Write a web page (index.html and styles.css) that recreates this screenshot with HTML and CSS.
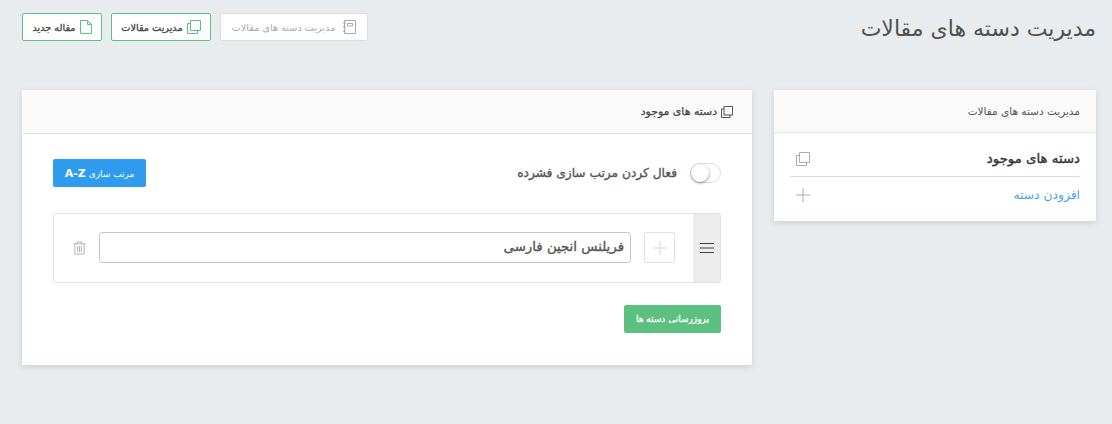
FILE: index.html
```html
<!DOCTYPE html>
<html lang="fa" dir="rtl">
<head>
<meta charset="utf-8">
<title>مدیریت دسته های مقالات</title>
<link rel="stylesheet" href="styles.css">
</head>
<body>
<header class="top">
  <h1 class="title">مدیریت دسته های مقالات</h1>
  <nav class="actions">
    <a class="btn btn-muted"><svg class="ico" viewBox="0 0 14 14"><path d="M2.500.5h11v13h-11zM.8 3h3M.8 7h3M.8 11h3M5.500 3.500h5v2.500h-5z"/></svg>مدیریت دسته های مقالات</a>
    <a class="btn btn-green btn-manage"><svg class="ico ico-green" viewBox="0 0 14 14"><path d="M3.500.5h10v10h-10zM3.500 3.500h-3v10h10v-3"/></svg>مدیریت مقالات</a>
    <a class="btn btn-green btn-new"><svg class="ico ico-green ico-doc" viewBox="0 0 12 14"><path d="M.5.5h7l4 4v9h-11zM7.500.5v4h4"/></svg>مقاله جدید</a>
  </nav>
</header>
<main class="columns">
  <aside class="card side">
    <div class="side-head">مدیریت دسته های مقالات</div>
    <ul class="menu">
      <li class="menu-item menu-active">
        <span>دسته های موجود</span>
        <svg class="menu-ico" viewBox="0 0 14 14"><path d="M3.500.5h10v10h-10zM3.500 3.500h-3v10h10v-3"/></svg>
      </li>
      <li class="menu-item menu-link">
        <span>افزودن دسته</span>
        <svg class="menu-ico" viewBox="0 0 14 14"><path d="M7 0v14M0 7h14"/></svg>
      </li>
    </ul>
  </aside>
  <section class="card content">
    <div class="content-head"><svg class="head-ico" viewBox="0 0 14 14"><path d="M3.500.5h10v10h-10zM3.500 3.500h-3v10h10v-3"/></svg>دسته های موجود</div>
    <div class="content-body">
      <div class="tools">
        <label class="toggle-wrap"><span class="toggle"><span class="knob"></span></span><span>فعال کردن مرتب سازی فشرده</span></label>
        <button class="btn-sort">مرتب سازی <b class="az" dir="ltr">A-Z</b></button>
      </div>
      <div class="row">
        <div class="handle"><svg class="handle-ico" viewBox="0 0 14 10"><path d="M0 .5h14M0 5h14M0 9.500h14"/></svg></div>
        <div class="row-main">
          <span class="add"><svg class="add-ico" viewBox="0 0 14 14"><path d="M7 0v14M0 7h14"/></svg></span>
          <input class="field" type="text" value="فریلنس انجین فارسی">
          <svg class="trash" viewBox="0 0 14 14"><path d="M.5 2.500h13M4.500 2.500v-2h5v2M2 2.500v11h10v-11M5 5v6.500M7 5v6.500M9 5v6.500"/></svg>
        </div>
      </div>
      <button class="btn-save">بروزرسانی دسته ها</button>
    </div>
  </section>
</main>
</body>
</html>
```
FILE: styles.css
```css
* { box-sizing: border-box; }
html, body { height: 100%; }
body {
  margin: 0;
  padding: 13px 16px 0 22px;
  background: #e9ecef;
  font-family: "DejaVu Sans", "Noto Sans", sans-serif;
  color: #4a4a4a;
  overflow: hidden;
}
svg { fill: none; stroke: currentColor; stroke-width: 1; flex: none; display: block; }
.top { display: flex; justify-content: space-between; align-items: center; height: 28px; }
.title { margin: 4px 0 0; font-size: 22px; font-weight: 400; color: #505050; line-height: 32px; }
.actions { display: flex; gap: 9px; }
.btn {
  display: flex; align-items: center; justify-content: center; gap: 4px;
  height: 28px; width: 100px;
  border: 1px solid #5cc080; border-radius: 2px;
  background: #fff; font-size: 9.700px; color: #444;
  -webkit-text-stroke: .3px #444;
}
.btn-muted { width: 148px; border-color: #dcdcdc; color: #aaa; font-size: 9.700px; gap: 7px; -webkit-text-stroke: 0; }
.btn-new { width: 80px; }
.ico { width: 14px; height: 14px; color: #aaa; }
.ico-green { color: #5cc080; }
.ico-doc { width: 12px; }
.columns { display: flex; gap: 22px; align-items: flex-start; margin-top: 49px; }
.card { background: #fff; border-radius: 2px; box-shadow: 0 2px 6px rgba(60, 70, 90, .18); }
.side { width: 322px; height: 131px; flex: none; }
.side-head {
  height: 43px; padding: 0 16px; display: flex; align-items: center;
  background: #fafafa; border-bottom: 1px solid #e6e6e6;
  font-size: 10.500px; color: #555;
}
.menu { list-style: none; margin: 0; padding: 8px 16px 0; }
.menu-item { display: flex; justify-content: space-between; align-items: center; height: 36px; padding-left: 6px; font-size: 12.300px; }
.menu-active { border-bottom: 1px solid #dcdcdc; color: #333; font-size: 13.300px; -webkit-text-stroke: .35px #333; }
.menu-link { color: #4a9ff0; }
.menu-ico { width: 14px; height: 14px; color: #b3aaa5; -webkit-text-stroke: 0; }
.content { width: 730px; height: 275px; flex: none; }
.content-head {
  height: 44px; padding: 0 19px 0 16px; display: flex; align-items: center; gap: 4px;
  background: #fafafa; border-bottom: 1px solid #e6e6e6;
  font-size: 10.900px; color: #444; -webkit-text-stroke: .25px #444;
}
.head-ico { width: 12px; height: 12px; color: #333; }
.content-body { padding: 25px 31px 0; }
.tools { display: flex; justify-content: space-between; align-items: center; height: 28px; }
.toggle-wrap { display: flex; align-items: center; gap: 13px; font-size: 12.200px; color: #555; -webkit-text-stroke: .35px #555; }
.toggle { width: 31px; height: 20px; border: 1px solid #dfdfdf; border-radius: 10px; background: #fff; display: flex; justify-content: flex-end; }
.knob { width: 18px; height: 18px; border-radius: 50%; background: #fff; box-shadow: 0 1px 3px rgba(0, 0, 0, .45); }
.btn-sort {
  width: 93px; height: 28px; border: 0; border-radius: 2px; padding: 0;
  background: #2f9bee; color: #fff; font-family: inherit; font-size: 9px;
}
.az { font-size: 11px; }
.row { display: flex; height: 70px; margin-top: 26px; border: 1px solid #e3e3e3; border-radius: 2px; }
.handle { width: 27px; flex: none; background: #ededed; display: flex; align-items: center; justify-content: center; }
.handle-ico { width: 14px; height: 10px; color: #444; }
.row-main { flex: 1; display: flex; align-items: center; gap: 13px; padding: 0 18px 1px 19px; }
.add { width: 31px; height: 31px; flex: none; border: 1px solid #e0e0e0; border-radius: 2px; display: flex; align-items: center; justify-content: center; }
.add-ico { width: 14px; height: 14px; color: #d5dcc8; }
.field {
  flex: 1; min-width: 0; height: 31px; padding: 0 6px 2px;
  border: 1px solid #c8c8c8; border-radius: 3px;
  font-family: inherit; font-size: 13.300px; color: #555; text-align: right; direction: rtl;
  -webkit-text-stroke: .35px #555;
}
.trash { width: 13px; height: 14px; color: #b3aeaa; }
.btn-save {
  display: block; width: 97px; height: 28px; margin-top: 22px; padding: 0; border: 0; border-radius: 2px;
  background: #5cc080; color: #fff; font-family: inherit; font-size: 9px;
  -webkit-text-stroke: .3px #fff;
}
```
